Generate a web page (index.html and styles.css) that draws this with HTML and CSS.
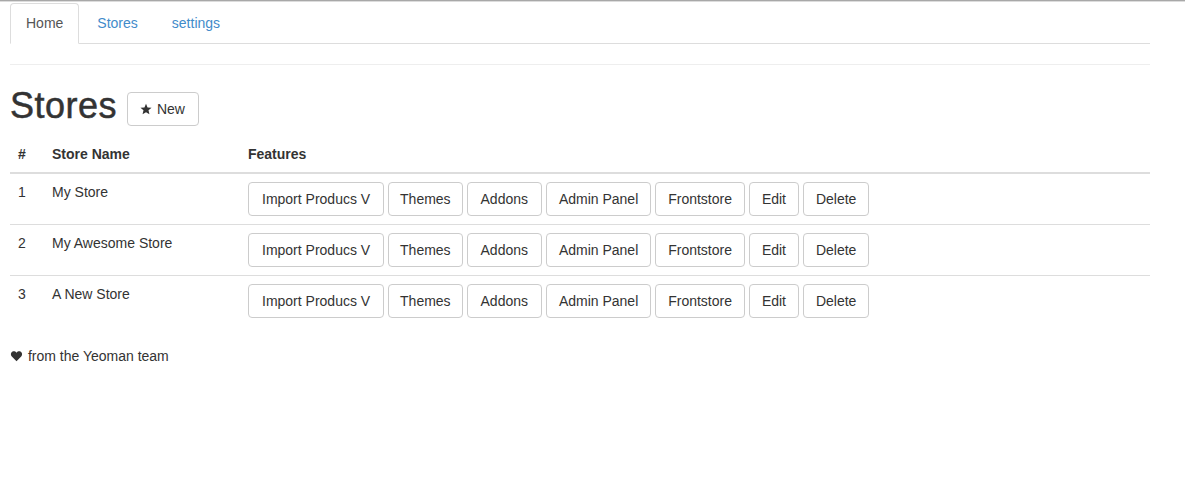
FILE: index.html
```html
<!DOCTYPE html>
<html>
<head>
<meta charset="utf-8">
<link rel="stylesheet" href="styles.css">
</head>
<body>
<div class="topline"></div>
<div class="container">
  <ul class="nav-tabs">
    <li class="active"><a>Home</a></li>
    <li><a>Stores</a></li>
    <li><a>settings</a></li>
  </ul>
  <hr class="rule">
  <h1 class="title"><span class="title-text">Stores</span> <button class="btn btn-new"><svg class="icon-star" viewBox="0 0 24 24" width="12" height="12"><path d="M12 1.5l3.1 7.4 8 .6-6.1 5.2 1.9 7.8L12 18.3l-6.9 4.2 1.9-7.8L.9 9.5l8-.6z" fill="#333"/></svg> New</button></h1>
  <table class="table">
    <thead>
      <tr><th class="c-num">#</th><th class="c-name">Store Name</th><th>Features</th></tr>
    </thead>
    <tbody>
      <tr>
        <td>1</td><td>My Store</td>
        <td class="features"><button class="btn btn-import">Import Producs V</button> <button class="btn btn-themes">Themes</button> <button class="btn btn-addons">Addons</button> <button class="btn">Admin Panel</button> <button class="btn">Frontstore</button> <button class="btn">Edit</button> <button class="btn">Delete</button></td>
      </tr>
      <tr>
        <td>2</td><td>My Awesome Store</td>
        <td class="features"><button class="btn btn-import">Import Producs V</button> <button class="btn btn-themes">Themes</button> <button class="btn btn-addons">Addons</button> <button class="btn">Admin Panel</button> <button class="btn">Frontstore</button> <button class="btn">Edit</button> <button class="btn">Delete</button></td>
      </tr>
      <tr>
        <td>3</td><td>A New Store</td>
        <td class="features"><button class="btn btn-import">Import Producs V</button> <button class="btn btn-themes">Themes</button> <button class="btn btn-addons">Addons</button> <button class="btn">Admin Panel</button> <button class="btn">Frontstore</button> <button class="btn">Edit</button> <button class="btn">Delete</button></td>
      </tr>
    </tbody>
  </table>
  <p class="footer"><svg class="icon-heart" viewBox="0 0 24 24" width="13" height="12"><path d="M12 22.5L2.6 13.2C-.3 10.3.3 5 4 3.2c2.8-1.3 5.9-.4 8 2.3 2.1-2.7 5.2-3.6 8-2.3 3.7 1.8 4.3 7.1 1.4 10z" fill="#333"/></svg> from the Yeoman team</p>
</div>
</body>
</html>
```
FILE: styles.css
```css
html, body {
  margin: 0;
  padding: 0;
  background: #fff;
}
body {
  font-family: "Helvetica Neue", "Liberation Sans", Arial, sans-serif;
  font-size: 14px;
  line-height: 20px;
  color: #333;
}
.topline {
  height: 1px;
  background: #a8a8a8;
  border-bottom: 1px solid #dcdcdc;
}
.container {
  width: 1140px;
  padding: 1px 10px 0;
}
.nav-tabs {
  list-style: none;
  margin: 0;
  padding: 0;
  display: flex;
  border-bottom: 1px solid #ddd;
}
.nav-tabs li {
  margin-bottom: -1px;
}
.nav-tabs a {
  display: block;
  padding: 9px 15px 10px;
  margin-right: 2px;
  line-height: 20px;
  border: 1px solid transparent;
  border-radius: 4px 4px 0 0;
  color: #428bca;
  cursor: pointer;
}
.nav-tabs li.active a {
  color: #555;
  background: #fff;
  border-color: #ddd #ddd transparent;
}
.rule {
  margin: 20px 0 21px;
  border: 0;
  border-top: 1px solid #eee;
}
.title {
  margin: 20px 0 10px;
  font-size: 36px;
  line-height: 1.1;
  font-weight: 500;
  color: #333;
  display: flex;
  align-items: center;
  gap: 10px;
}
.title-text {
  letter-spacing: 0.5px;
  -webkit-text-stroke: 0.5px #333;
}
.btn {
  display: inline-block;
  margin: 0;
  padding: 6px 12px;
  font-family: inherit;
  font-size: 14px;
  line-height: 20px;
  color: #333;
  background: #fff;
  border: 1px solid #ccc;
  border-radius: 4px;
  vertical-align: middle;
  cursor: pointer;
}
.btn-import {
  padding: 6px 13px;
}
.btn-themes {
  padding: 6px 11px;
}
.btn-addons {
  padding: 6px 13px;
}
.btn-new {
  position: relative;
  top: 3px;
  padding-right: 13px;
}
.icon-star {
  vertical-align: -1px;
  margin-right: 1px;
}
.table {
  width: 100%;
  border-collapse: collapse;
  border-spacing: 0;
  margin-bottom: 20px;
}
.table th, .table td {
  padding: 8px;
  text-align: left;
  vertical-align: top;
  line-height: 20px;
}
.table th {
  font-weight: bold;
  vertical-align: bottom;
  border-bottom: 2px solid #ddd;
}
.table td {
  border-top: 1px solid #ddd;
}
.table tbody tr:first-child td {
  border-top: 0;
}
.c-num { width: 18px; }
.c-name { width: 180px; }
.features {
  white-space: nowrap;
}
.footer {
  margin: 0;
  padding: 0;
}
.icon-heart {
  vertical-align: -1px;
  margin-right: 1px;
}
```
